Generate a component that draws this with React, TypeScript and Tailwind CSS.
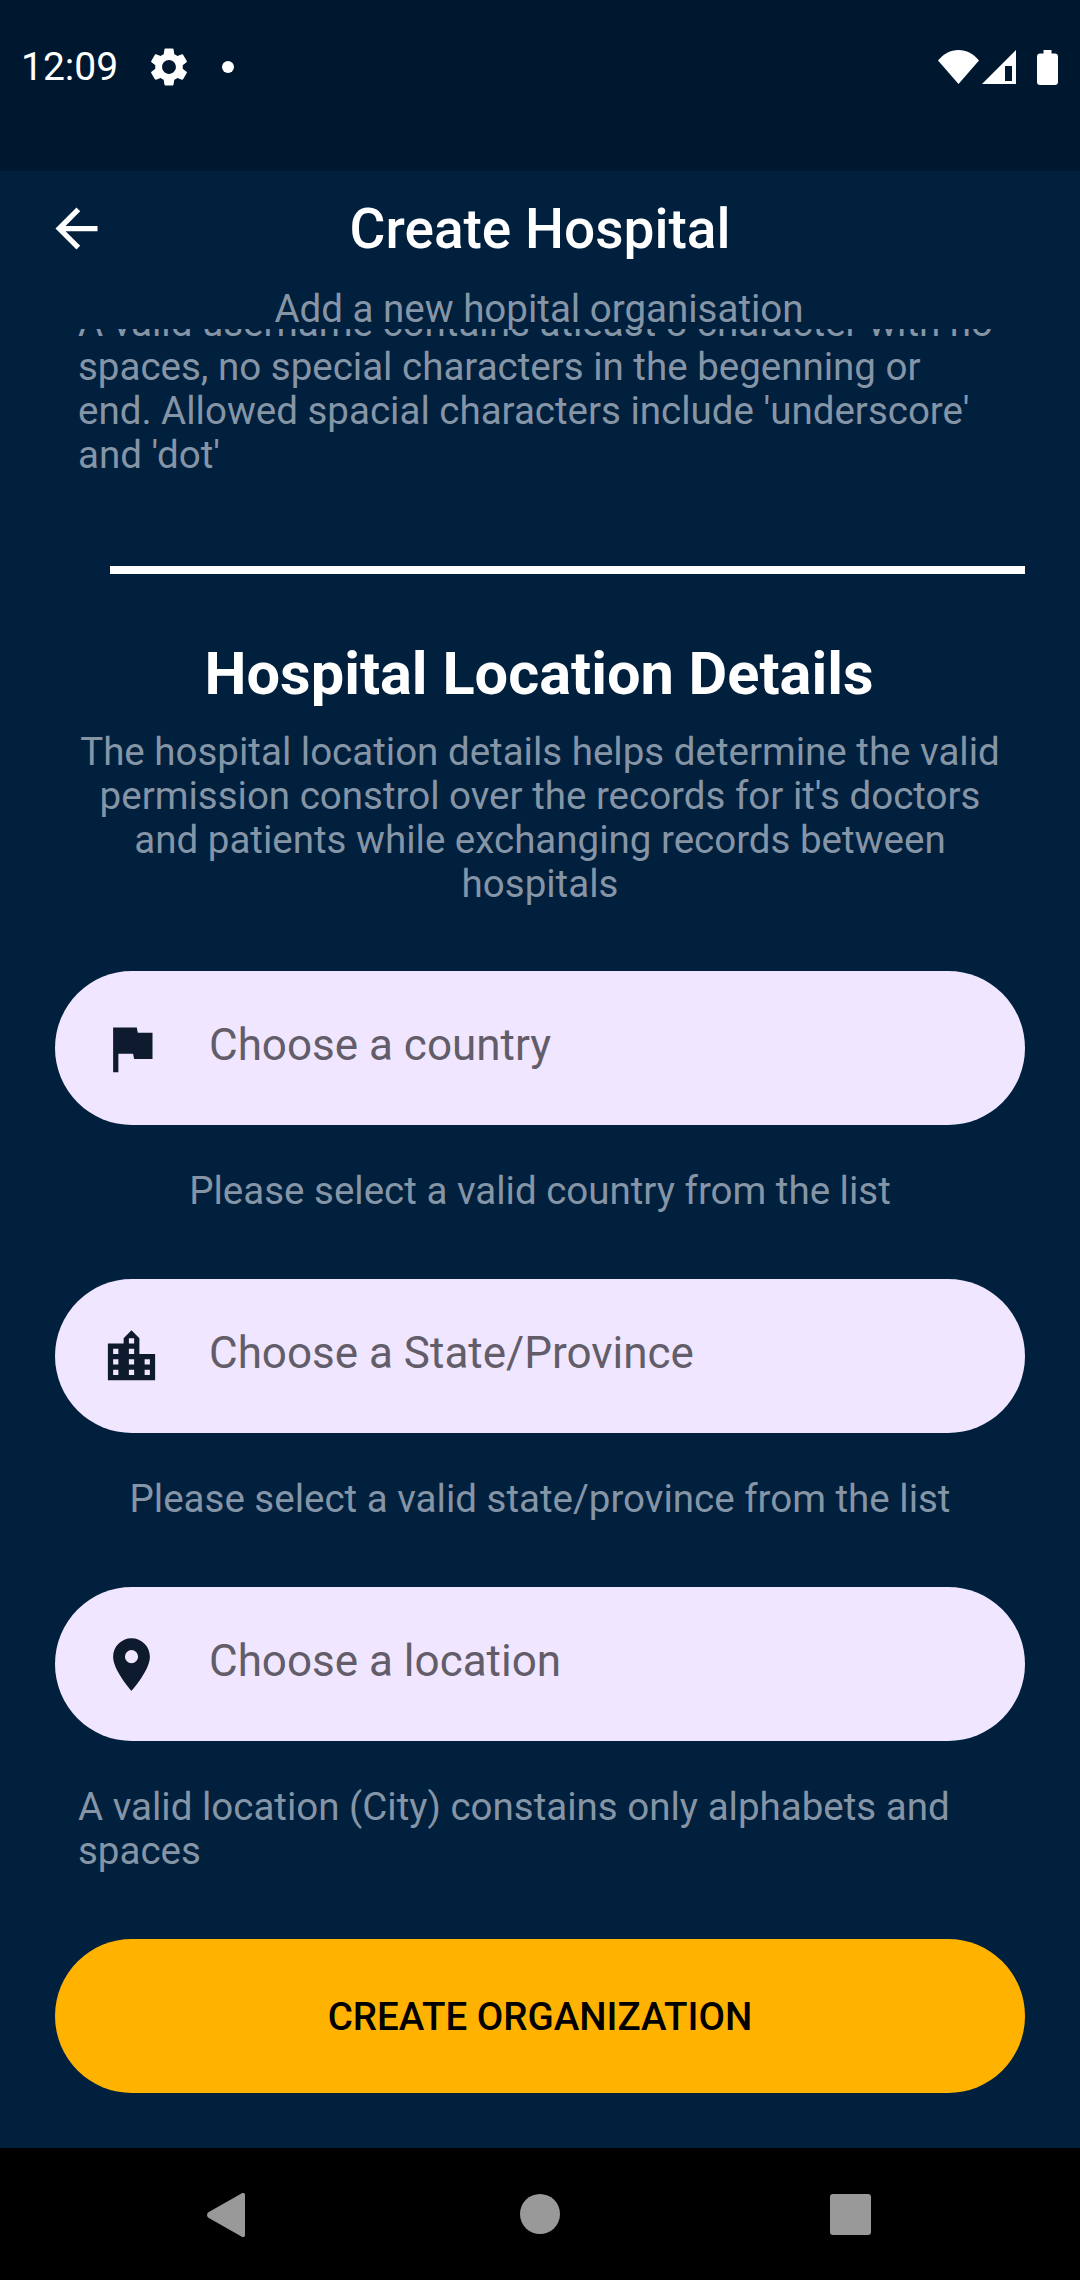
import { MdArrowBack, MdFlag, MdLocationCity, MdPlace, MdSettings } from "react-icons/md";
import type { ReactNode } from "react";

const Field = ({
  icon,
  label,
  help,
  helpClassName,
}: {
  icon: ReactNode;
  label: string;
  help: string;
  helpClassName: string;
}) => {
  return (
    <div className="mt-[66px]">
      <div className="mx-[55px] h-[154px] rounded-full bg-[#f0e6ff] flex items-center pl-[45px]">
        <span className="w-[63px] h-[63px] text-[#0e1a2e] shrink-0">{icon}</span>
        <span className="ml-[46px] pb-[7px] text-[44px] leading-[52px] text-[#625d69]">
          {label}
        </span>
      </div>
      <p className={`mt-[44px] px-[78px] text-[38.500px] leading-[44px] text-[#8695a6] ${helpClassName}`}>
        {help}
      </p>
    </div>
  );
};

export default function App() {
  return (
    <div className="w-[1080px] h-[2280px] flex flex-col bg-[#00203e] overflow-hidden font-['Roboto',sans-serif]">
      {/* status bar */}
      <div className="h-[171px] shrink-0 bg-[#001730] flex items-start justify-between pt-[45px] pl-[21px] pr-[22px] text-white">
        <div className="flex items-center h-[44px]">
          <span className="text-[39px] leading-[44px]">12:09</span>
          <MdSettings className="w-[46px] h-[46px] ml-[28px]" />
          <span className="w-[12px] h-[12px] rounded-full bg-white ml-[30px]" />
        </div>
        <div className="flex items-center h-[44px]">
          <svg viewBox="0 0 41 34" className="w-[41px] h-[34px] fill-white">
            <path d="M20.500 34 0 10.500C5.500 4 12.500 0 20.500 0S35.500 4 41 10.500Z" />
          </svg>
          <svg viewBox="0 0 34 34" className="w-[34px] h-[34px] ml-[3px]">
            <path d="M0 34 34 0V34Z" fill="#ffffff" />
            <path d="M23 16H30V31H23Z" fill="#001730" />
          </svg>
          <svg viewBox="0 0 21 35" className="w-[21px] h-[35px] ml-[21px] fill-white">
            <path d="M6.500 0H14.500V3.500H18C19.700 3.500 21 4.800 21 6.500V32C21 33.700 19.700 35 18 35H3C1.300 35 0 33.700 0 32V6.500C0 4.800 1.300 3.500 3 3.500H6.500Z" />
          </svg>
        </div>
      </div>

      {/* app bar */}
      <div className="h-[158px] shrink-0 relative z-10 bg-[#00203e] text-center">
        <MdArrowBack className="absolute left-[45px] top-[26px] w-[63px] h-[63px] text-white" />
        <h1 className="pt-[27px] text-[55px] leading-[62px] font-medium text-white">
          Create Hospital
        </h1>
        <p className="mt-[27px] pr-[2px] text-[38.500px] leading-[44px] text-[#8695a6]">
          Add a new hopital organisation
        </p>
      </div>

      {/* scrolled content */}
      <div className="flex-1 min-h-0 overflow-hidden">
        <div className="-mt-[28px]">
          <p className="pl-[78px] pr-[85px] text-[38.500px] leading-[44px] text-[#8695a6]">
            A valid username contains atleast 8 character with no spaces, no special characters in the begenning or end. Allowed spacial characters include 'underscore' and 'dot'
          </p>
          <div className="mt-[89px] ml-[110px] mr-[55px] h-[8px] bg-white" />
          <h2 className="mt-[67px] pr-[2px] text-center text-[59.500px] leading-[66px] font-bold text-white">
            Hospital Location Details
          </h2>
          <p className="mt-[23px] -mb-[1px] px-[78px] text-center text-[38.500px] leading-[44px] text-[#8695a6]">
            The hospital location details helps determine the valid permission constrol over the records for it's doctors and patients while exchanging records between hospitals
          </p>
          <Field
            helpClassName="text-center"
            icon={<MdFlag className="w-full h-full" />}
            label="Choose a country"
            help="Please select a valid country from the list"
          />
          <Field
            helpClassName="text-center"
            icon={<MdLocationCity className="w-full h-full" />}
            label="Choose a State/Province"
            help="Please select a valid state/province from the list"
          />
          <Field
            helpClassName="text-left"
            icon={<MdPlace className="w-full h-full" />}
            label="Choose a location"
            help="A valid location (City) constains only alphabets and spaces"
          />
          <button className="block mt-[66px] mx-[55px] w-[970px] h-[154px] pt-[2px] rounded-full bg-[#ffb300] text-[38.500px] font-medium text-black">
            CREATE ORGANIZATION
          </button>
        </div>
      </div>

      {/* nav bar */}
      <div className="h-[132px] shrink-0 bg-black flex items-start pt-[45px] pl-[207px]">
        <svg viewBox="0 0 38 44" className="w-[38px] h-[44px] fill-[#999999]">
          <path d="M34 0.800C36 -1 38 0 38 2V42C38 44 36 45 34 43.200L1 24.500C-0.300 23 -0.300 21 1 19.500Z" />
        </svg>
        <span className="ml-[275px] mt-[1px] w-[40px] h-[40px] rounded-full bg-[#999999]" />
        <span className="ml-[270px] mt-[1px] w-[41px] h-[41px] rounded-[3px] bg-[#999999]" />
      </div>
    </div>
  );
}
